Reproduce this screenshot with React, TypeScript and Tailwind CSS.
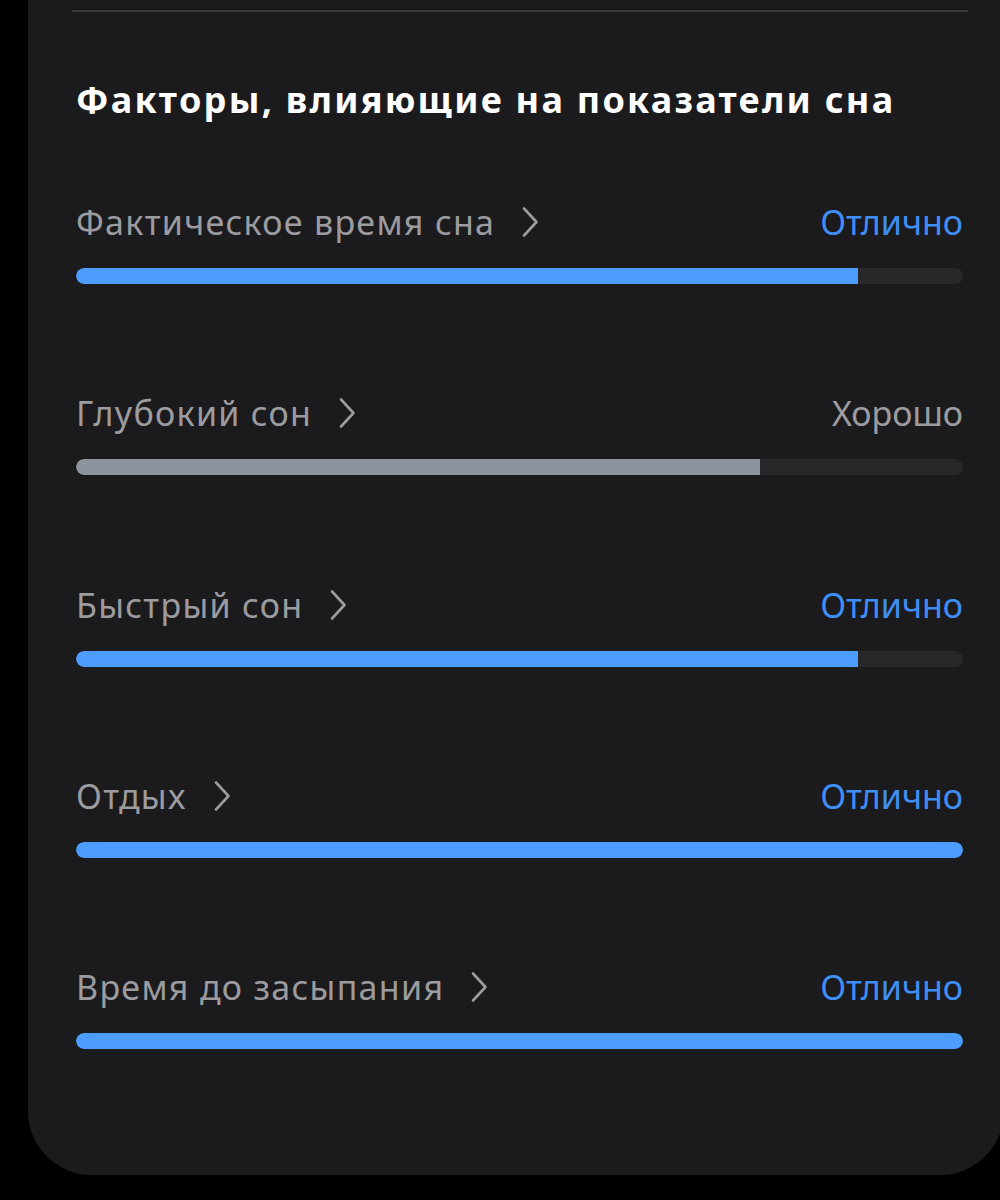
import React from 'react';

const factors = [
  { label: 'Фактическое время сна', value: 'Отлично', pct: 88.2, good: true },
  { label: 'Глубокий сон', value: 'Хорошо', pct: 77.1, good: false },
  { label: 'Быстрый сон', value: 'Отлично', pct: 88.2, good: true },
  { label: 'Отдых', value: 'Отлично', pct: 100, good: true },
  { label: 'Время до засыпания', value: 'Отлично', pct: 100, good: true },
];

function Chevron() {
  return (
    <svg width="18" height="32" viewBox="0 0 18 32" fill="none" className="ml-[26px] shrink-0">
      <path d="M3 2.5 L15.5 16 L3 29.5" stroke="#9c9ca0" strokeWidth="2.6" strokeLinecap="round" strokeLinejoin="round" />
    </svg>
  );
}

export default function App() {
  return (
    <div className="w-[1000px] h-[1200px] bg-black overflow-hidden" style={{ fontFamily: '"Noto Sans", Roboto, sans-serif' }}>
      <div className="ml-[28px] w-[976px] h-[1175px] bg-[#1b1b1d] rounded-b-[64px] pt-[10px]">
        {/* divider */}
        <div className="ml-[44px] w-[896px] h-[2px] bg-[#3a3a3c]" />

        <div className="pl-[48px] pr-[41px]">
          <h2 className="mt-[66px] text-[36px] leading-[44px] font-bold text-white tracking-[2.25px] whitespace-nowrap">
            Факторы, влияющие на показатели сна
          </h2>

          <div className="mt-[76px]">
            {factors.map((f, i) => (
              <div key={f.label} className={i > 0 ? 'mt-[105.25px]' : ''}>
                <div className="flex items-center justify-between h-[48px]">
                  <div className="flex items-center">
                    <span className="text-[34px] leading-[48px] tracking-[1.3px] text-[#9c9ca0]">{f.label}</span>
                    <Chevron />
                  </div>
                  <span className={`text-[34px] leading-[48px] ${f.good ? 'text-[#3f8ef5]' : 'text-[#9c9ca0]'}`}>
                    {f.value}
                  </span>
                </div>
                <div className="mt-[22px] h-[16px] rounded-full bg-[#28282a] overflow-hidden">
                  <div
                    className={`h-full ${f.good ? 'bg-[#4c9dff]' : 'bg-[#8c949e]'} ${f.pct >= 100 ? 'rounded-full' : 'rounded-l-full'}`}
                    style={{ width: `${f.pct}%` }}
                  />
                </div>
              </div>
            ))}
          </div>
        </div>
      </div>
    </div>
  );
}
